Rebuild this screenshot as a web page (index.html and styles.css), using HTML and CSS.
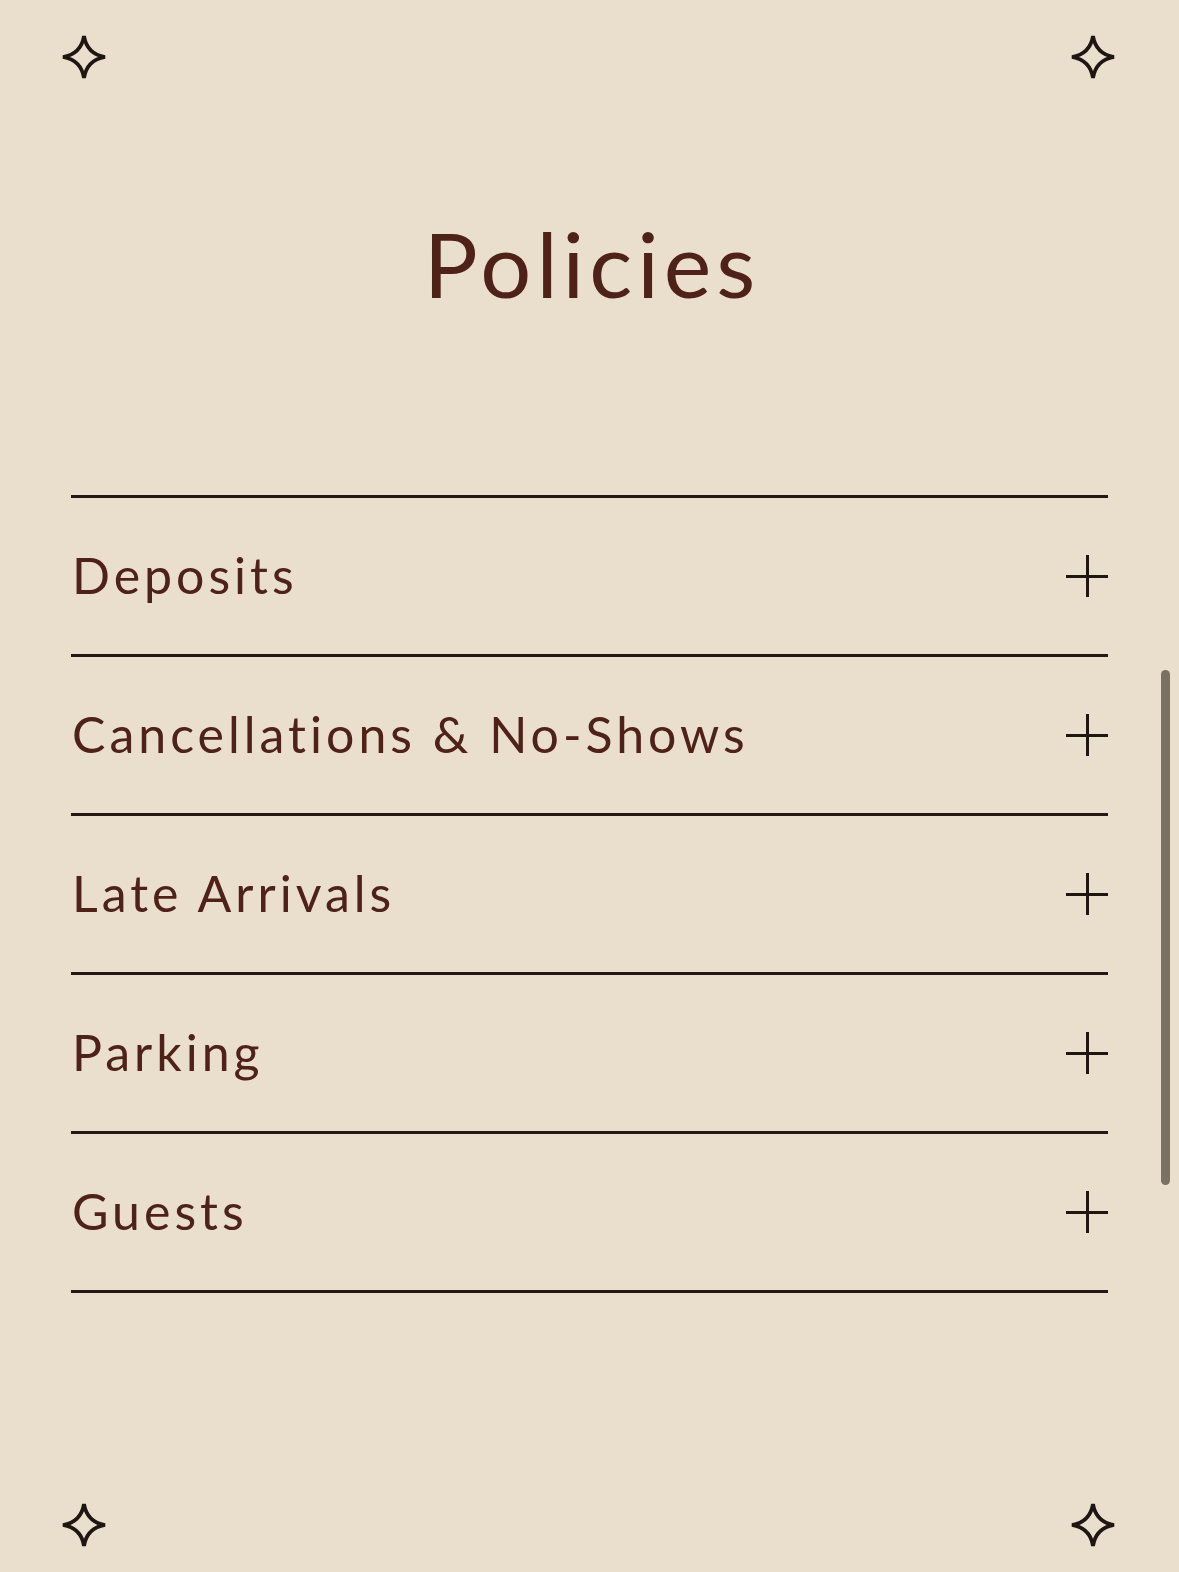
FILE: index.html
```html
<!DOCTYPE html>
<html lang="en">
<head>
<meta charset="utf-8">
<title>Policies</title>
<link rel="stylesheet" href="styles.css">
</head>
<body>
<div class="page">
  <div class="corners corners-top">
    <svg class="sparkle" viewBox="0 0 44 44"><path d="M22 1 Q25 19 43 22 Q25 25 22 43 Q19 25 1 22 Q19 19 22 1 Z"/></svg>
    <svg class="sparkle" viewBox="0 0 44 44"><path d="M22 1 Q25 19 43 22 Q25 25 22 43 Q19 25 1 22 Q19 19 22 1 Z"/></svg>
  </div>

  <h1 class="title">Policies</h1>

  <ul class="accordion">
    <li class="item"><span class="label">Deposits</span><span class="plus"></span></li>
    <li class="item"><span class="label">Cancellations &amp; No-Shows</span><span class="plus"></span></li>
    <li class="item"><span class="label">Late Arrivals</span><span class="plus"></span></li>
    <li class="item"><span class="label">Parking</span><span class="plus"></span></li>
    <li class="item"><span class="label">Guests</span><span class="plus"></span></li>
  </ul>

  <div class="corners corners-bottom">
    <svg class="sparkle" viewBox="0 0 44 44"><path d="M22 1 Q25 19 43 22 Q25 25 22 43 Q19 25 1 22 Q19 19 22 1 Z"/></svg>
    <svg class="sparkle" viewBox="0 0 44 44"><path d="M22 1 Q25 19 43 22 Q25 25 22 43 Q19 25 1 22 Q19 19 22 1 Z"/></svg>
  </div>

  <div class="scroll-thumb"></div>
</div>
</body>
</html>
```

FILE: styles.css
```css
* {
  box-sizing: border-box;
}

html, body {
  margin: 0;
  padding: 0;
  background: #eadfcc;
}

.page {
  position: relative;
  height: 1572px;
  display: flex;
  flex-direction: column;
  background: #eadfcc;
  font-family: "Lato", "Open Sans", sans-serif;
  color: #4e2219;
  overflow: hidden;
}

.corners {
  display: flex;
  justify-content: space-between;
  padding: 0 64px 0 62px;
}

.corners-top {
  padding-top: 35px;
}

.corners-bottom {
  margin-top: auto;
  padding-bottom: 25px;
}

.sparkle {
  width: 44px;
  height: 44px;
  display: block;
  overflow: visible;
}

.sparkle path {
  fill: none;
  stroke: #1f1511;
  stroke-width: 3.8;
  stroke-linejoin: miter;
}

.title {
  margin: 139px 0 0;
  padding-left: 5px;
  text-align: center;
  font-size: 90px;
  font-weight: 400;
  line-height: 1;
  letter-spacing: 5px;
}

.accordion {
  list-style: none;
  margin: 187px 71px 0;
  padding: 0;
  border-top: 3px solid #251713;
}

.item {
  height: 159px;
  display: flex;
  align-items: center;
  justify-content: space-between;
  border-bottom: 3px solid #251713;
}

.label {
  font-size: 50px;
  font-weight: 400;
  line-height: 1;
  letter-spacing: 4px;
  padding-left: 1px;
  padding-bottom: 3px;
}

.plus {
  position: relative;
  width: 42px;
  height: 42px;
  flex: none;
}

.plus::before,
.plus::after {
  content: "";
  position: absolute;
  background: #1f1511;
}

.plus::before {
  left: 0;
  right: 0;
  top: 20px;
  height: 3px;
}

.plus::after {
  top: 0;
  bottom: 0;
  left: 20px;
  width: 3px;
}

.scroll-thumb {
  position: absolute;
  right: 9px;
  top: 670px;
  width: 9px;
  height: 515px;
  border-radius: 5px;
  background: #7a7163;
}
```
